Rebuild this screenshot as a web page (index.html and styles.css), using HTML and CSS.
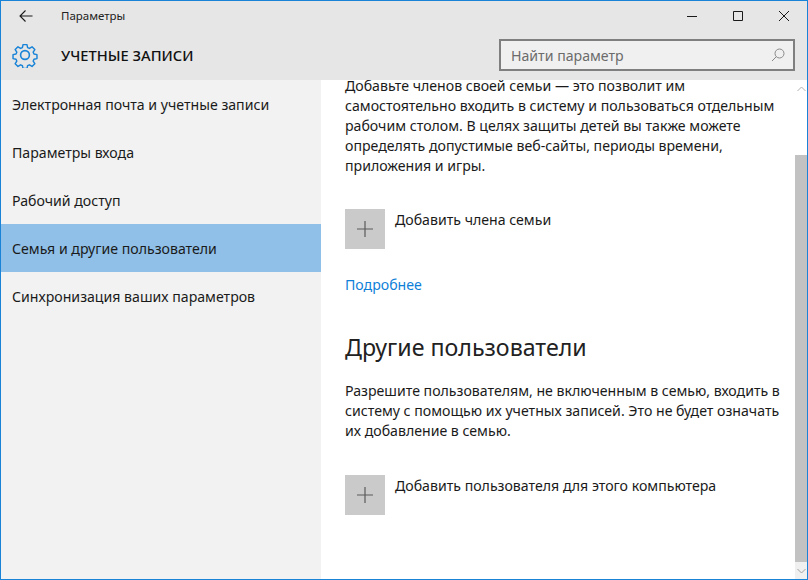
FILE: index.html
```html
<!DOCTYPE html>
<html lang="ru">
<head>
<meta charset="utf-8">
<title>Параметры</title>
<link rel="stylesheet" href="styles.css">
</head>
<body>
<div class="window">
  <header class="head">
    <div class="titlebar">
      <svg class="back" width="14" height="12" viewBox="0 0 14 12"><path d="M6.500.5 1 6l5.500 5.500M1 6h12.500" fill="none" stroke="#1a1a1a" stroke-width="1.1"/></svg>
      <span class="apptitle">Параметры</span>
      <div class="controls">
        <svg width="12" height="12" viewBox="0 0 12 12"><path d="M1 6.500h10" stroke="#1a1a1a" fill="none"/></svg>
        <svg width="12" height="12" viewBox="0 0 12 12"><path d="M1.500 1.500h9v9h-9z" stroke="#1a1a1a" fill="none"/></svg>
        <svg width="12" height="12" viewBox="0 0 12 12"><path d="M1 1l10 10M11 1 1 11" stroke="#1a1a1a" fill="none"/></svg>
      </div>
    </div>
    <div class="pagebar">
      <svg class="gear" width="26" height="26" viewBox="0 0 26 26"><g fill="none" stroke="#1883d7" stroke-width="1.6" stroke-linejoin="round"><path d="M10.800 1.500h4.400l.7 3.300 2 .9 2.900-1.800 3.100 3.100-1.800 2.900.9 2 3.300.7v4.400l-3.300.7-.9 2 1.800 2.900-3.100 3.100-2.900-1.800-2 .9-.7 3.300h-4.400l-.7-3.300-2-.9-2.900 1.800-3.100-3.100 1.800-2.900-.9-2-3.300-.7v-4.400l3.300-.7.9-2-1.800-2.900 3.100-3.100 2.900 1.800 2-.9z" transform="translate(1.300 1.300) scale(.9)"/><circle cx="13" cy="13" r="4.400"/></g></svg>
      <h1 class="pagetitle">УЧЕТНЫЕ ЗАПИСИ</h1>
      <div class="search">
        <span class="search-text">Найти параметр</span>
        <svg width="14" height="14" viewBox="0 0 14 14"><g fill="none" stroke="#8a8a8a"><circle cx="8.500" cy="5.500" r="4.500"/><path d="M5.300 8.700 1 13"/></g></svg>
      </div>
    </div>
  </header>
  <div class="body">
    <nav class="nav">
      <a class="nav-item">Электронная почта и учетные записи</a>
      <a class="nav-item">Параметры входа</a>
      <a class="nav-item">Рабочий доступ</a>
      <a class="nav-item active">Семья и другие пользователи</a>
      <a class="nav-item">Синхронизация ваших параметров</a>
    </nav>
    <main class="content">
      <p class="para first">Добавьте членов своей семьи — это позволит им самостоятельно входить в систему и пользоваться отдельным рабочим столом. В целях защиты детей вы также можете определять допустимые веб-сайты, периоды времени, приложения и игры.</p>
      <div class="add add-family">
        <span class="plus"><svg width="16" height="16" viewBox="0 0 16 16"><path d="M8 0v16M0 8h16" stroke="#5a5a5a" stroke-width="1.200"/></svg></span>
        <span class="add-label">Добавить члена семьи</span>
      </div>
      <a class="more">Подробнее</a>
      <h2 class="section">Другие пользователи</h2>
      <p class="para second">Разрешите пользователям, не включенным в семью, входить в систему с помощью их учетных записей. Это не будет означать их добавление в семью.</p>
      <div class="add">
        <span class="plus"><svg width="16" height="16" viewBox="0 0 16 16"><path d="M8 0v16M0 8h16" stroke="#5a5a5a" stroke-width="1.200"/></svg></span>
        <span class="add-label">Добавить пользователя для этого компьютера</span>
      </div>
    </main>
    <div class="scrollbar">
      <div class="arrow"><svg width="9" height="6" viewBox="0 0 9 6"><path d="M.5 5l4-4 4 4" fill="none" stroke="#b0b0b0"/></svg></div>
      <div class="track"><div class="thumb"></div></div>
      <div class="arrow"><svg width="9" height="6" viewBox="0 0 9 6"><path d="M.5 1l4 4 4-4" fill="none" stroke="#a0a0a0"/></svg></div>
    </div>
  </div>
</div>
</body>
</html>
```
FILE: styles.css
```css
* { box-sizing: border-box; }
html, body { margin: 0; padding: 0; height: 100%; }
body { font-family: "Noto Sans", sans-serif; color: #1a1a1a; overflow: hidden; background: #fff; }
.window { width: 808px; height: 580px; border: 1px solid #1883d7; display: flex; flex-direction: column; }
.head { background: #e6e6e6; height: 79px; flex: none; }
.titlebar { height: 29px; display: flex; align-items: center; padding-left: 18px; }
.back { flex: none; margin-right: 28px; }
.apptitle { font-size: 11.500px; color: #222; }
.controls { margin-left: auto; display: flex; gap: 34px; padding-right: 17px; }
.controls svg { display: block; }
.pagebar { height: 50px; display: flex; align-items: center; padding-left: 11px; padding-right: 12px; }
.gear { flex: none; margin-right: 23px; }
.pagetitle { margin: 0; font-size: 14.700px; font-weight: 500; color: #111; }
.search { margin-left: auto; width: 296px; height: 32px; border: 2px solid #7f7f7f; background: #f0f0f0; display: flex; align-items: center; justify-content: space-between; padding: 0 8px 0 10px; }
.search-text { font-size: 14.130px; color: #6b6b6b; }
.body { flex: 1; display: flex; min-height: 0; }
.nav { width: 320px; flex: none; background: #f2f2f2; display: flex; flex-direction: column; }
.nav-item { height: 48px; display: flex; align-items: center; padding-left: 11px; font-size: 14.130px; color: #1a1a1a; }
.nav-item.active { background: #90c0e8; }
.content { flex: 1; min-width: 0; overflow: hidden; padding-left: 24px; padding-right: 10px; font-size: 14.130px; }
.para { margin: 0; line-height: 20px; }
.para.first { margin-top: -4px; height: 100px; width: 445px; }
.add { display: flex; align-items: flex-start; gap: 10px; }
.add-family { margin-top: 33px; }
.plus { width: 40px; height: 40px; background: #cacaca; display: flex; align-items: center; justify-content: center; flex: none; }
.add-label { line-height: 20px; padding-top: 1px; }
.more { display: block; margin-top: 26px; line-height: 20px; color: #0f7fd8; }
.section { margin: 37px 0 0; font-size: 23.200px; font-weight: 400; line-height: 30px; color: #222; }
.para.second { margin-top: 19px; width: 445px; }
.second + .add { margin-top: 34px; }
.scrollbar { width: 12px; flex: none; display: flex; flex-direction: column; background: #fff; }
.arrow { height: 17px; flex: none; display: flex; align-items: center; justify-content: center; background: #f0f0f0; }
.scrollbar .arrow:first-child { background: #fff; }
.track { flex: 1; padding-top: 58px; display: flex; flex-direction: column; }
.thumb { flex: 1; background: #c2c2c2; }
```
